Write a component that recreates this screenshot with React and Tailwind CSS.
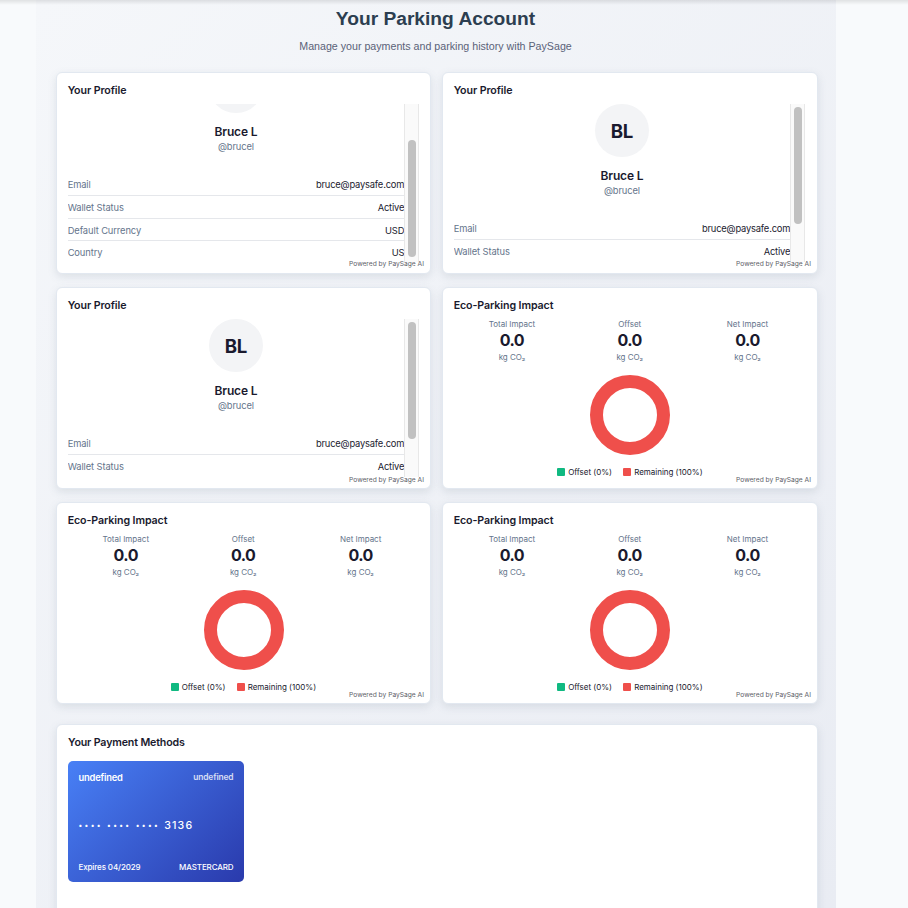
const ROWS = [
  ['Email', 'bruce@paysafe.com'],
  ['Wallet Status', 'Active'],
  ['Default Currency', 'USD'],
  ['Country', 'US'],
];

function Card({ title, children }) {
  return (
    <section className="relative h-[202px] rounded-[6px] border border-[#e2e8f0] bg-white px-[10.67px] pt-[9px] shadow-[0_3px_8px_rgba(100,116,139,0.16)]">
      <h2 className="h-[16px] text-[10.67px] leading-[17.4px] font-semibold tracking-[-0.1px]">{title}</h2>
      {children}
      <span className="absolute right-[6px] bottom-[3.6px] text-[6.67px] leading-[10px] text-[#5d6068]">
        Powered by PaySage AI
      </span>
    </section>
  );
}

function Profile({ scrolled = false }) {
  return (
    <Card title="Your Profile">
      <div className="mt-[6px] flex h-[158px] w-[351px] overflow-hidden">
        <div className={`w-[336.6px] shrink-0 ${scrolled ? '-mt-[44px]' : ''}`}>
          <div className="mx-auto flex h-[53px] w-[54px] items-center justify-center rounded-full bg-[#f3f4f6] pt-[2px] text-[18.67px] font-bold tracking-[-0.3px]">
            BL
          </div>
          <div className="mt-[10px] text-center text-[12px] leading-[18px] font-semibold tracking-[-0.15px]">
            Bruce L
          </div>
          <div className="text-center text-[9.33px] leading-[12px] tracking-[-0.1px] text-[#64748b]">@brucel</div>
          <dl className="mt-[20px]">
            {ROWS.map(([label, value]) => (
              <div
                key={label}
                className="flex h-[22.8px] items-center justify-between border-b border-[#e5e7eb] pt-[2px] text-[9.33px] tracking-[-0.1px] last:border-0 last:pt-0"
              >
                <dt className="text-[#64748b]">{label}</dt>
                <dd className="tracking-[-0.17px]">{value}</dd>
              </div>
            ))}
          </dl>
        </div>
        <div className="flex h-full w-[14.5px] shrink-0 justify-center border-x border-[#e8e8e8] bg-[#fafafa]">
          <div className={`h-[117px] w-[8px] rounded-full bg-[#c1c1c1] ${scrolled ? 'mt-[36px]' : 'mt-[3px]'}`} />
        </div>
      </div>
    </Card>
  );
}

function Impact() {
  return (
    <Card title="Eco-Parking Impact">
      <div className="mt-[6px] -ml-[0.6px] grid grid-cols-3 text-center text-[8px] text-[#64748b]">
        {['Total Impact', 'Offset', 'Net Impact'].map((label) => (
          <div key={label}>
            <div className="leading-[10px]">{label}</div>
            <div className="text-[16px] leading-[22px] font-bold tracking-[-0.55px] text-[#1a1a2e]">0.0</div>
            <div className="leading-[12px]">kg CO₂</div>
          </div>
        ))}
      </div>
      <div className="mx-auto mt-[12px] h-[80px] w-[80px] rounded-full border-[13.3px] border-[#ef4f4b]" />
      <div className="mt-[11px] flex items-center justify-center gap-[11.5px] text-[8px] leading-[12px] tracking-[-0.02px]">
        <span className="flex items-center gap-[2.7px]">
          <i className="h-[8px] w-[8px] rounded-[1px] bg-[#10b981]" />
          Offset (0%)
        </span>
        <span className="flex items-center gap-[2.7px]">
          <i className="h-[8px] w-[8px] rounded-[1px] bg-[#ef4f4b]" />
          Remaining (100%)
        </span>
      </div>
    </Card>
  );
}

export default function App() {
  return (
    <div className="relative h-[908px] overflow-hidden bg-[#f8fafc] font-['Inter',sans-serif] text-[#1a1a2e]">
      <div className="absolute inset-x-0 top-0 h-[5px] bg-linear-to-b from-black/10 to-transparent" />
      <main className="ml-[36px] h-[908px] w-[800px] bg-linear-[135deg,#f5f7fa_0%,#e9ecf3_100%] px-[20px]">
        <header className="h-[72px] pt-[7px] pr-[1px] text-center font-['Liberation_Sans',sans-serif]">
          <h1 className="text-[19.2px] leading-[24px] font-bold text-[#2c3e50]">Your Parking Account</h1>
          <p className="mt-[8px] text-[10.67px] leading-[14px] text-[#5a6278]">
            Manage your payments and parking history with PaySage
          </p>
        </header>
        <div className="grid w-[762px] grid-cols-[375px_376px] gap-x-[11px] gap-y-[13.2px]">
          <Profile scrolled />
          <Profile />
          <Profile />
          <Impact />
          <Impact />
          <Impact />
        </div>
        <section className="mt-[19.6px] h-[220px] w-[762px] rounded-[6px] border border-[#e2e8f0] bg-white px-[11px] pt-[9px] shadow-[0_3px_8px_rgba(100,116,139,0.16)]">
          <h2 className="h-[16px] text-[10.67px] leading-[17.4px] font-semibold tracking-[-0.15px]">Your Payment Methods</h2>
          <div className="mt-[11px] flex h-[121px] w-[176px] flex-col justify-between rounded-[5px] bg-linear-[135deg,#4880f6,#2a3aac] px-[10.5px] pt-[10px] pb-[9px] text-white">
            <div className="flex justify-between leading-[12px]">
              <span className="text-[9.33px] leading-[14px] font-semibold tracking-[-0.2px]">undefined</span>
              <span className="text-[8.4px] font-semibold tracking-[-0.1px] opacity-80">undefined</span>
            </div>
            <div className="flex items-center pt-[6px] leading-[14px] font-medium">
              <span className="text-[7px] tracking-[2.36px] whitespace-pre">•••• •••• •••• </span>
              <span className="text-[10.67px] tracking-[1.1px]">3136</span>
            </div>
            <div className="flex justify-between text-[8px] leading-[12px] font-medium tracking-[-0.12px]">
              <span>Expires 04/2029</span>
              <span>MASTERCARD</span>
            </div>
          </div>
        </section>
      </main>
    </div>
  );
}
